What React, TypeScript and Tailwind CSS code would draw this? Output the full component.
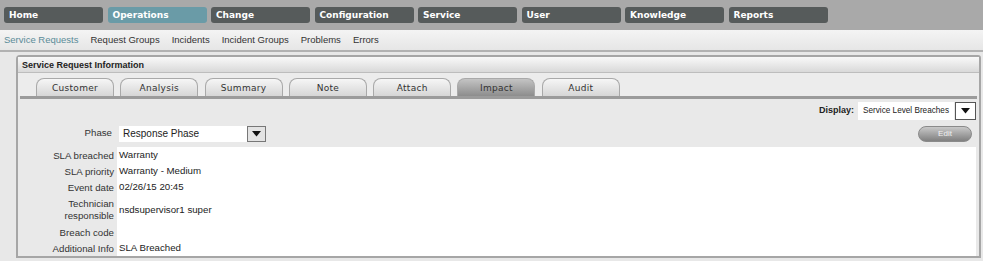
import React from "react";

const topItems = ["Home", "Operations", "Change", "Configuration", "Service", "User", "Knowledge", "Reports"];
const subItems = ["Service Requests", "Request Groups", "Incidents", "Incident Groups", "Problems", "Errors"];
const tabs = ["Customer", "Analysis", "Summary", "Note", "Attach", "Impact", "Audit"];

function Arrow() {
  return (
    <svg width="9" height="6" viewBox="0 0 9 6">
      <path d="M0 0 L9 0 L4.5 5.5 Z" fill="#111" />
    </svg>
  );
}

export default function App() {
  const rows: { label: React.ReactNode; value: string; h: string }[] = [
    { label: "SLA breached", value: "Warranty", h: "h-[16px]" },
    { label: "SLA priority", value: "Warranty - Medium", h: "h-[16px]" },
    { label: "Event date", value: "02/26/15 20:45", h: "h-[16px]" },
    { label: (<><div>Technician</div><div>responsible</div></>), value: "nsdsupervisor1 super", h: "h-[29px]" },
    { label: "Breach code", value: "", h: "h-[16px]" },
    { label: "Additional Info", value: "SLA Breached", h: "h-[16px]" },
  ];
  return (
    <div className="w-[983px] h-[261px] overflow-hidden bg-[#e8e8e8] font-['Liberation_Sans',Arial,sans-serif]">
      <div className="h-[30px] bg-[#a9a9a9] flex gap-[4.5px] pl-[4px] pt-[7px]">
        {topItems.map((t) => (
          <div
            key={t}
            className={`w-[99px] h-[16px] rounded-[3px] pl-[5px] text-[9px] leading-[16px] font-bold text-white font-['DejaVu_Sans',sans-serif] ${t === "Operations" ? "bg-[#6a9ba7]" : "bg-[#565b5b]"}`}
          >
            {t}
          </div>
        ))}
      </div>
      <div className="h-[22px] bg-gradient-to-b from-[#f4f4f4] to-[#e6e6e6] border-b-2 border-[#b2b2b2] flex items-center gap-[12px] pl-[4px] text-[9.5px]">
        {subItems.map((s, i) => (
          <span key={s} className={i === 0 ? "text-[#5a8b98]" : "text-[#333]"}>{s}</span>
        ))}
      </div>
      <div className="ml-[16px] mt-[3px] w-[965px] border-2 border-[#a6a6a6] rounded-tl-[4px] rounded-tr-[3px] bg-[#e9e9e9] flex flex-col">
        <div className="shrink-0 h-[16px] bg-gradient-to-b from-[#f9f9f9] to-[#d9d9d9] border-b border-[#bdbdbd] pl-[4px] text-[9px] font-bold leading-[16px] text-[#222]">
          Service Request Information
        </div>
        <div className="shrink-0 h-[23px] bg-[#ececec] flex items-end gap-[6.3px] pl-[18px]">
          {tabs.map((t) => (
            <div
              key={t}
              className={`w-[78px] h-[18px] pt-[1px] rounded-t-[8px] border border-b-0 border-[#a9a9a9] text-center text-[9px] leading-[17px] font-['DejaVu_Sans',sans-serif] tracking-[0.3px] text-[#333] ${t === "Impact" ? "bg-gradient-to-b from-[#c4c4c4] to-[#8d8d8d]" : "bg-gradient-to-b from-[#f6f6f6] to-[#d6d6d6]"}`}
            >
              {t}
            </div>
          ))}
        </div>
        <div className="shrink-0 h-[3px] mx-[2px] bg-[#9b9b9b]" />
        <div className="shrink-0 flex justify-end items-center h-[21px] pt-[3px] pr-[3px]">
          <span className="text-[9px] font-bold text-[#222] mr-[4px]">Display:</span>
          <div className="w-[96px] h-[18px] bg-white text-[8.2px] leading-[18px] pl-[5px] text-[#222] whitespace-nowrap overflow-hidden">Service Level Breaches</div>
          <div className="w-[21px] h-[18px] ml-[1px] bg-white border border-[#555] flex items-center justify-center">
            <Arrow />
          </div>
        </div>
        <div className="shrink-0 flex items-center h-[22px] pt-[5px]">
          <div className="w-[97px] text-right pr-[3px] text-[9.7px] text-[#333]">Phase</div>
          <div className="ml-[4px] w-[128px] h-[16px] bg-white text-[10px] leading-[16px] pl-[4px] text-[#222]">Response Phase</div>
          <div className="w-[19px] h-[16px] bg-[#e3e3e3] border border-[#777] flex items-center justify-center">
            <Arrow />
          </div>
          <div className="flex-1" />
          <div className="w-[54px] h-[16px] mr-[7px] rounded-full border border-[#8a8a8a] bg-gradient-to-b from-[#c9c9c9] to-[#808080] text-[8px] leading-[14px] text-center text-[#f2f2f2]">
            Edit
          </div>
        </div>
        <div className="shrink-0 mt-[5px] mr-[3px] flex flex-col">
          {rows.map((r, i) => (
            <div key={i} className={`flex shrink-0 ${r.h}`}>
              <div className="w-[99px] pr-[3px] pt-[1px] flex flex-col justify-center items-end text-right text-[9.7px] leading-[12px] text-[#333] bg-[#e9e9e9]">
                {r.label}
              </div>
              <div className="flex-1 bg-white pl-[2px] pt-[1px] flex items-center text-[9.7px] text-[#222]">{r.value}</div>
            </div>
          ))}
        </div>
      </div>
    </div>
  );
}
